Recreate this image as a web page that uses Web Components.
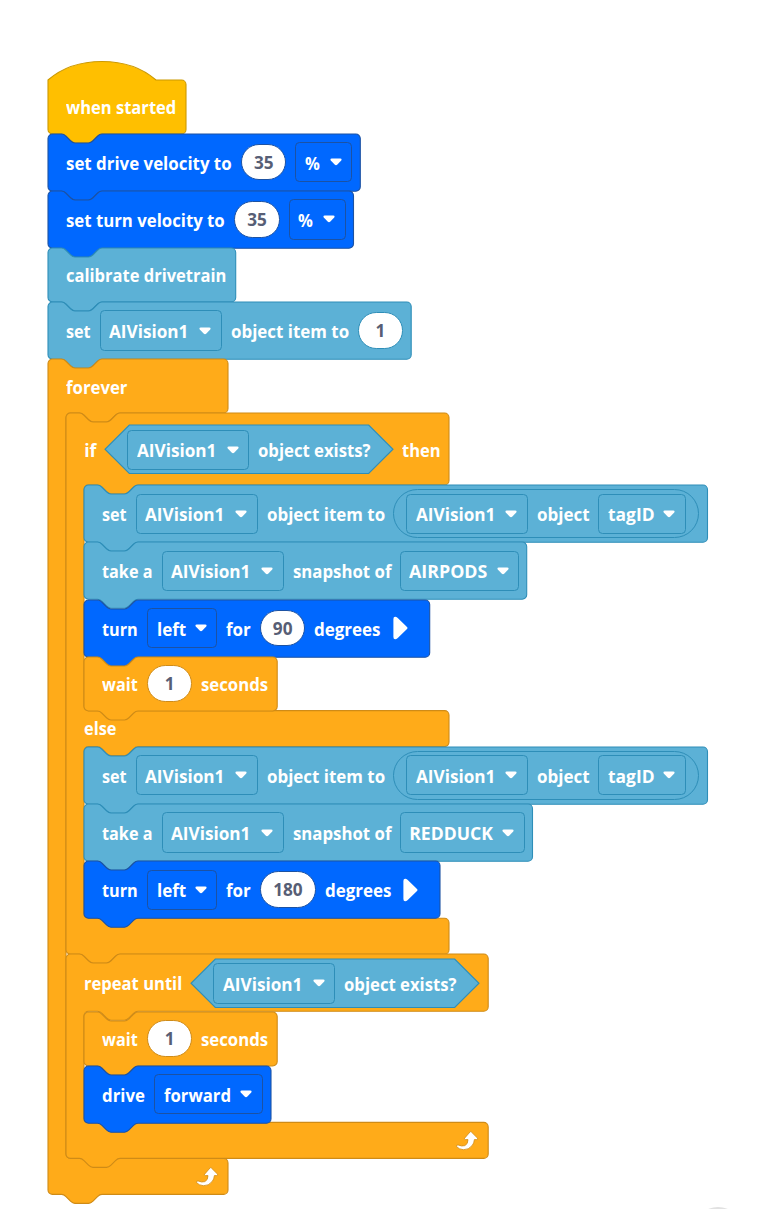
<!DOCTYPE html>
<html lang="en">
<head>
<meta charset="utf-8">
<title>Block program</title>
<style>
html,body{margin:0;background:#fff}
body{width:768px;height:1209px;overflow:hidden;position:relative}
</style>
</head>
<body>
<block-workspace>
<code-block kind="event" hat w="138" h="54"><block-label w="110">when started</block-label></code-block>
<code-block kind="drive" w="312.3" h="57.2"><block-label w="166">set drive velocity to</block-label><value-pill w="45.2">35</value-pill><drop-field w="57" tw="15">%</drop-field></code-block>
<code-block kind="drive" w="305.5" h="57.2"><block-label w="159.2">set turn velocity to</block-label><value-pill w="45.2">35</value-pill><drop-field w="57" tw="15">%</drop-field></code-block>
<code-block kind="sense" w="187.7" h="54"><block-label w="160.5">calibrate drivetrain</block-label></code-block>
<code-block kind="sense" w="363.2" h="57.2"><block-label w="24.8">set</block-label><drop-field w="121.7" tw="79">AIVision1</drop-field><block-label w="118.3">object item to</block-label><value-pill w="45">1</value-pill></code-block>
<code-block kind="control" loop w="180" h="54" segs="54,745.4,36">
  <block-label w="61">forever</block-label>
  <code-block slot="body" kind="control" w="383" h="72" segs="72,225.6,36,171.6,36">
    <block-label w="12">if</block-label>
    <bool-reporter w="288"><drop-field w="121.7" tw="79">AIVision1</drop-field><block-label w="113">object exists?</block-label></bool-reporter>
    <block-label w="38.5">then</block-label>
    <code-block slot="body" kind="sense" w="623.5" h="57.2"><block-label w="24.8">set</block-label><drop-field w="121.7" tw="79">AIVision1</drop-field><block-label w="118.3">object item to</block-label><oval-reporter w="305.6"><drop-field w="121.7" tw="79">AIVision1</drop-field><block-label w="52.2">object</block-label><drop-field w="87.8" tw="46.5">tagID</drop-field></oval-reporter></code-block>
    <code-block slot="body" kind="sense" w="442.7" h="57.2"><block-label w="50.7">take a</block-label><drop-field w="121.7" tw="79">AIVision1</drop-field><block-label w="98.2">snapshot of</block-label><drop-field w="119.3" tw="78">AIRPODS</drop-field></code-block>
    <code-block slot="body" kind="drive" w="345.7" h="57.2"><block-label w="36">turn</block-label><drop-field w="69.9" tw="29">left</drop-field><block-label w="25">for</block-label><value-pill w="45.2">90</value-pill><block-label w="66.5">degrees</block-label><play-mark></play-mark></code-block>
    <code-block slot="body" kind="control" w="193.2" h="54"><block-label w="36">wait</block-label><value-pill w="45">1</value-pill><block-label w="67.5">seconds</block-label></code-block>
    <block-label slot="else" w="32.5">else</block-label>
    <code-block slot="else-body" kind="sense" w="623.5" h="57.2"><block-label w="24.8">set</block-label><drop-field w="121.7" tw="79">AIVision1</drop-field><block-label w="118.3">object item to</block-label><oval-reporter w="305.6"><drop-field w="121.7" tw="79">AIVision1</drop-field><block-label w="52.2">object</block-label><drop-field w="87.8" tw="46.5">tagID</drop-field></oval-reporter></code-block>
    <code-block slot="else-body" kind="sense" w="448.5" h="57.2"><block-label w="50.7">take a</block-label><drop-field w="121.7" tw="79">AIVision1</drop-field><block-label w="98.2">snapshot of</block-label><drop-field w="124.8" tw="84">REDDUCK</drop-field></code-block>
    <code-block slot="else-body" kind="drive" w="356" h="57.2"><block-label w="36">turn</block-label><drop-field w="69.9" tw="29">left</drop-field><block-label w="25">for</block-label><value-pill w="55.6">180</value-pill><block-label w="66.5">degrees</block-label><play-mark></play-mark></code-block>
  </code-block>
  <code-block slot="body" kind="control" loop w="422.2" h="57.2" segs="57.2,111.2,36">
    <block-label w="98">repeat until</block-label>
    <bool-reporter w="288"><drop-field w="121.7" tw="79">AIVision1</drop-field><block-label w="113">object exists?</block-label></bool-reporter>
    <code-block slot="body" kind="control" w="193.2" h="54"><block-label w="36">wait</block-label><value-pill w="45">1</value-pill><block-label w="67.5">seconds</block-label></code-block>
    <code-block slot="body" kind="drive" w="187" h="57.2"><block-label w="43">drive</block-label><drop-field w="108.7" tw="67.5">forward</drop-field></code-block>
  </code-block>
</code-block>
<round-hint></round-hint>
</block-workspace>
<script>
const R = 4.5;
const NOTCH = 'c2.25 0 3.375 1.125 4.5 2.25l4.5 4.5c1.125 1.125 2.25 2.25 4.5 2.25h13.5c2.25 0 3.375 -1.125 4.5 -2.25l4.5 -4.5c1.125 -1.125 2.25 -2.25 4.5 -2.25';
const TAB = 'c-2.25 0 -3.375 1.125 -4.5 2.25l-4.5 4.5c-1.125 1.125 -2.25 2.25 -4.5 2.25h-13.5c-2.25 0 -3.375 -1.125 -4.5 -2.25l-4.5 -4.5c-1.125 -1.125 -2.25 -2.25 -4.5 -2.25';

class BlockWorkspace extends HTMLElement {
  constructor() {
    super();
    this.attachShadow({mode: 'open'}).innerHTML = `<style>
      :host{display:flex;flex-direction:column;align-items:flex-start;box-sizing:border-box;width:768px;height:1209px;padding:79.6px 0 0 48.2px;color:#fff;font:700 17.6px/24px "Open Sans","Noto Sans",sans-serif}
    </style><slot></slot>`;
  }
}

class CodeBlock extends HTMLElement {
  constructor() {
    super();
    const w = +this.getAttribute('w'), h = +this.getAttribute('h');
    const segs = (this.getAttribute('segs') || String(h)).split(',').map(Number);
    const total = segs.reduce((a, b) => a + b, 0);
    const hat = this.hasAttribute('hat');
    const [fill, line] = {event: ['#ffbf00', '#cc9900'], drive: ['#0068ff', '#1c52a3'], sense: ['#5cb1d6', '#2e8eb8'], control: ['#ffab19', '#cf8b17']}[this.getAttribute('kind')];
    let d = hat ? `M0 0c28.125 -24.75 79.875 -24.75 108 0` : `M0 ${R}a${R} ${R} 0 0 1 ${R} ${-R}H13.5${NOTCH}`;
    d += `H${w - R}a${R} ${R} 0 0 1 ${R} ${R}`;
    let y = 0;
    for (let i = 0; i < segs.length; i += 2) {
      y += segs[i];
      d += `V${y - R}a${R} ${R} 0 0 1 ${-R} ${R}`;
      if (i + 1 < segs.length) {
        d += `H72${TAB}H${18 + R}a${R} ${R} 0 0 0 ${-R} ${R}`;
        y += segs[i + 1];
        d += `V${y - R}a${R} ${R} 0 0 0 ${R} ${R}H${w - R}a${R} ${R} 0 0 1 ${R} ${R}`;
      }
    }
    d += `H54${TAB}H${R}a${R} ${R} 0 0 1 ${-R} ${-R}Z`;
    const loop = this.hasAttribute('loop') ? '<loop-mark></loop-mark>' : '';
    let rows = `<div class="row" style="height:${h}px"><slot></slot></div>`;
    if (segs.length > 1) rows += `<div class="body" style="height:${segs[1]}px"><slot name="body"></slot></div>`;
    if (segs.length > 3) rows += `<div class="row else" style="height:${segs[2]}px"><slot name="else"></slot></div><div class="body" style="height:${segs[3]}px"><slot name="else-body"></slot></div>`;
    if (segs.length > 1) rows += `<div class="row foot">${loop}</div>`;
    this.attachShadow({mode: 'open'}).innerHTML = `<style>
      :host{display:flex;flex-direction:column;position:relative;flex:none;width:${w}px;height:${total}px;--line:${line};--fill:${fill}}
      svg{position:absolute;left:0;top:0;overflow:visible}
      .row{display:flex;align-items:center;gap:9px;padding-left:18px;box-sizing:border-box;position:relative;flex:none;width:100%}
      .else{padding-bottom:2px}
      .body{display:flex;flex-direction:column;align-items:flex-start;padding-left:18px;flex:none}
      .foot{height:36px;justify-content:flex-end;padding-right:9px}
    </style><svg width="${w}" height="${total}"><path d="${d}" fill="${fill}" stroke="${line}" stroke-width="1.1"/></svg>${rows}`;
  }
}

class BlockLabel extends HTMLElement {
  constructor() {
    super();
    this.attachShadow({mode: 'open'}).innerHTML = `<style>
      :host{display:block;flex:none;position:relative;width:${this.getAttribute('w')}px;white-space:nowrap}
      span{display:inline-block;transform-origin:0 50%;position:relative;top:.5px}
    </style><span><slot></slot></span>`;
  }
}

class ValuePill extends HTMLElement {
  constructor() {
    super();
    this.attachShadow({mode: 'open'}).innerHTML = `<style>
      :host{display:flex;align-items:center;justify-content:center;flex:none;box-sizing:border-box;width:${this.getAttribute('w')}px;height:36.5px;border:1px solid var(--line);border-radius:18.3px;background:#fff;color:#575e75;font-size:17.2px;padding-top:1px}
    </style><slot></slot>`;
  }
}

class DropField extends HTMLElement {
  constructor() {
    super();
    this.attachShadow({mode: 'open'}).innerHTML = `<style>
      :host{display:flex;align-items:center;justify-content:space-between;flex:none;box-sizing:border-box;width:${this.getAttribute('w')}px;height:40.3px;border:1.1px solid var(--line);border-radius:4.5px;padding:0 9.5px 0 8.5px}
      svg{flex:none}
    </style><block-label w="${this.getAttribute('tw')}"><slot></slot></block-label>
    <svg width="12" height="8" viewBox="0 0 12 8"><path d="M1.8 .5H10.2Q12.3 .7 11.2 2.5L7.4 6.6Q6 7.9 4.6 6.6L.8 2.5Q-.3 .7 1.8 .5Z" fill="#fff"/></svg>`;
  }
}

class BoolReporter extends HTMLElement {
  constructor() {
    super();
    const w = +this.getAttribute('w');
    this.attachShadow({mode: 'open'}).innerHTML = `<style>
      :host{display:flex;align-items:center;gap:9px;flex:none;box-sizing:border-box;width:${w}px;height:48.5px;padding-left:22.3px;position:relative;top:.5px;--line:#2e8eb8}
      svg{position:absolute;left:0;top:0;overflow:visible}
      ::slotted(*){position:relative}
    </style><svg width="${w}" height="48.5"><path d="M24.3 0H${w - 24.3}L${w} 24.25L${w - 24.3} 48.5H24.3L0 24.25Z" fill="#5cb1d6" stroke="#2e8eb8" stroke-width="1.1"/></svg><slot></slot>`;
  }
}

class OvalReporter extends HTMLElement {
  constructor() {
    super();
    this.attachShadow({mode: 'open'}).innerHTML = `<style>
      :host{display:flex;align-items:center;gap:9px;flex:none;box-sizing:border-box;width:${this.getAttribute('w')}px;height:49px;margin-left:-.8px;padding-left:12px;border:1.1px solid #2e8eb8;border-radius:25px;background:#5cb1d6}
    </style><slot></slot>`;
  }
}

class PlayMark extends HTMLElement {
  constructor() {
    super();
    this.attachShadow({mode: 'open'}).innerHTML = `<style>:host{display:block;width:16px;height:24px;margin-left:3px}svg{display:block}</style>
    <svg width="16" height="24" viewBox="0 0 16 24"><path d="M.4 3Q.4 .5 2.4 .7Q4 1 5 2.2L14 11Q15.2 12 14 13L5 21.8Q4 23 2.4 23.2Q.4 23.4 .4 21Z" fill="#fff"/></svg>`;
  }
}

class LoopMark extends HTMLElement {
  constructor() {
    super();
    this.attachShadow({mode: 'open'}).innerHTML = `<style>:host{display:block;width:24px;height:20px}svg{display:block;overflow:visible}</style>
    <svg width="24" height="20" viewBox="0 0 24 20"><path d="M16.2 .8L22.6 7.2Q23 8.6 21.8 8.6H19.4Q19.2 12.2 17 14.7Q13.7 18.9 8.4 18.7Q4.1 18.4 1.6 15.7Q1 13.8 3 13.9Q6.8 15.7 9.9 14.6Q13 13.2 13 8.6H10.2Q8.9 8.4 9.6 7.2L15 1Q15.6 .3 16.2 .8Z" fill="#fff" stroke="#cf8b17" stroke-width=".8"/></svg>`;
  }
}

class RoundHint extends HTMLElement {
  constructor() {
    super();
    this.attachShadow({mode: 'open'}).innerHTML = `<style>:host{position:absolute;left:694px;top:1207px;width:48px;height:48px;border-radius:50%;background:#e1e1e1}</style>`;
  }
}

customElements.define('block-workspace', BlockWorkspace);
customElements.define('block-label', BlockLabel);
customElements.define('value-pill', ValuePill);
customElements.define('drop-field', DropField);
customElements.define('bool-reporter', BoolReporter);
customElements.define('oval-reporter', OvalReporter);
customElements.define('play-mark', PlayMark);
customElements.define('loop-mark', LoopMark);
customElements.define('round-hint', RoundHint);
customElements.define('code-block', CodeBlock);

/* Condense each label so that it fills its declared width. */
function fit(root) {
  for (const el of root.querySelectorAll('*')) {
    if (el.localName === 'block-label') {
      const span = el.shadowRoot.querySelector('span');
      span.style.transform = `scaleX(${+el.getAttribute('w') / span.offsetWidth})`;
    }
    if (el.shadowRoot) fit(el.shadowRoot);
  }
}
fit(document);
</script>
</body>
</html>
